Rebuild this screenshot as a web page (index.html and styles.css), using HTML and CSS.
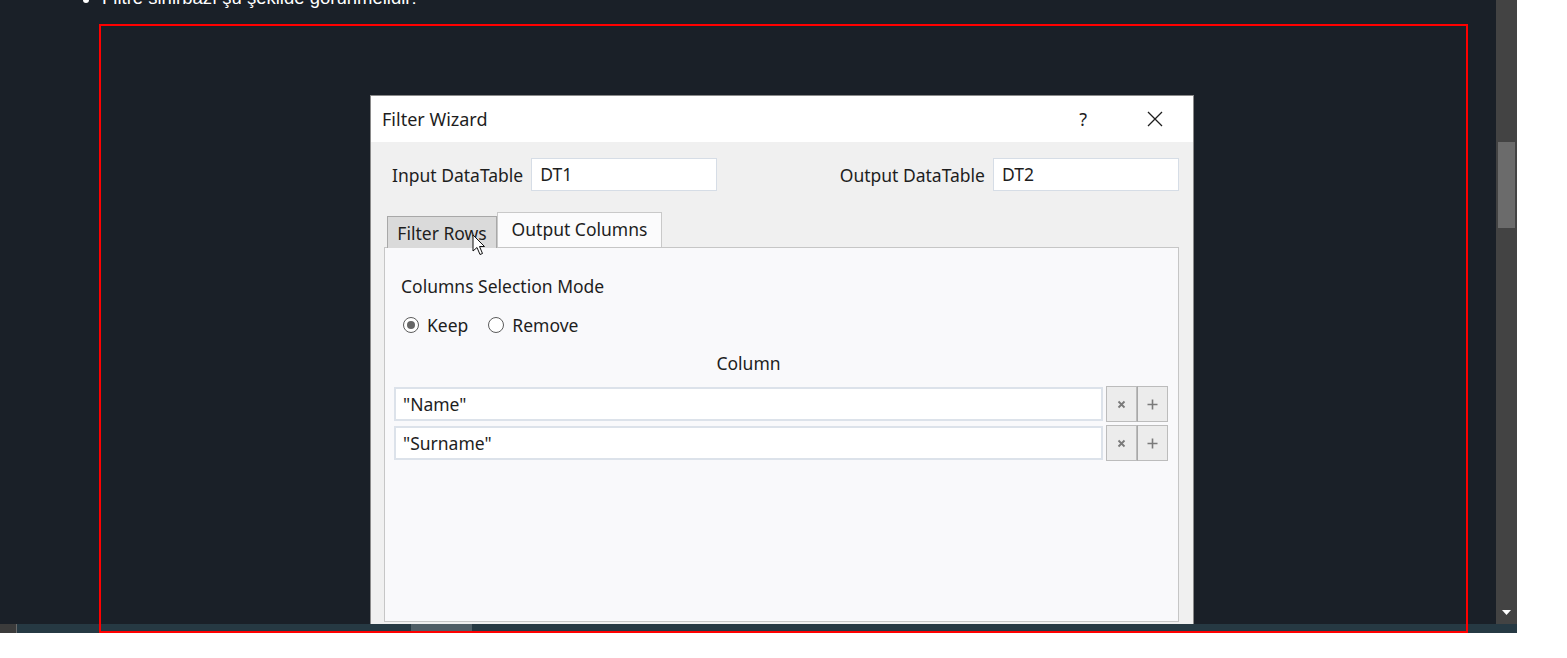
FILE: index.html
```html
<!DOCTYPE html>
<html lang="tr">
<head>
<meta charset="utf-8">
<title>Filter Wizard</title>
<link rel="stylesheet" href="styles.css">
</head>
<body>
<div class="app">
  <div class="main">
    <div class="content">
      <div class="note"><span class="dot"></span><span class="note-text">Filtre sihirbazı şu şekilde görünmelidir:</span></div>
      <div class="figure">
        <div class="dialog">
          <div class="titlebar">
            <span class="title">Filter Wizard</span>
            <span class="help">?</span>
            <svg class="close" width="16" height="16" viewBox="0 0 16 16"><path d="M1 1 L15 15 M15 1 L1 15" stroke="#1e1e1e" stroke-width="1.3" fill="none"/></svg>
          </div>
          <div class="body">
            <div class="io-row">
              <div class="field"><span class="label">Input DataTable</span><div class="io-input">DT1</div></div>
              <div class="field"><span class="label">Output DataTable</span><div class="io-input">DT2</div></div>
            </div>
            <div class="tabs">
              <div class="tab tab-hover">Filter Rows
                <svg class="cursor" width="14" height="23" viewBox="0 0 14 23"><path d="M1 1 L1 17 L5 13.5 L8 20.5 L10.5 19.5 L7.5 12.5 L12.5 12.5 Z" fill="#fff" stroke="#111" stroke-width="1" stroke-linejoin="round"/></svg>
              </div>
              <div class="tab tab-active">Output Columns</div>
            </div>
            <div class="panel">
              <div class="section-label">Columns Selection Mode</div>
              <div class="radios">
                <span class="radio checked"></span><span class="radio-label">Keep</span>
                <span class="radio"></span><span class="radio-label">Remove</span>
              </div>
              <div class="col-head">Column</div>
              <div class="col-list">
                <div class="col-row">
                  <div class="col-input">"Name"</div>
                  <div class="col-btn"><svg width="9" height="9" viewBox="0 0 9 9"><path d="M1.5 1.5 L7.5 7.5 M7.5 1.5 L1.5 7.5" stroke="#7a7a7a" stroke-width="1.8"/></svg></div>
                  <div class="col-btn"><svg width="11" height="11" viewBox="0 0 11 11"><path d="M5.5 0.5 V10.5 M0.5 5.5 H10.5" stroke="#7a7a7a" stroke-width="1.6"/></svg></div>
                </div>
                <div class="col-row">
                  <div class="col-input">"Surname"</div>
                  <div class="col-btn"><svg width="9" height="9" viewBox="0 0 9 9"><path d="M1.5 1.5 L7.5 7.5 M7.5 1.5 L1.5 7.5" stroke="#7a7a7a" stroke-width="1.8"/></svg></div>
                  <div class="col-btn"><svg width="11" height="11" viewBox="0 0 11 11"><path d="M5.5 0.5 V10.5 M0.5 5.5 H10.5" stroke="#7a7a7a" stroke-width="1.6"/></svg></div>
                </div>
              </div>
            </div>
          </div>
        </div>
      </div>
    </div>
    <div class="vscroll">
      <div class="vthumb"></div>
      <svg class="varrow" width="9" height="5" viewBox="0 0 9 5"><path d="M0 0 H9 L4.5 5 Z" fill="#fff"/></svg>
    </div>
  </div>
  <div class="hscroll"><div class="hbtn"></div><div class="hthumb"></div></div>
</div>
</body>
</html>
```
FILE: styles.css
```css
* { box-sizing: border-box; }
html, body { margin: 0; padding: 0; background: #ffffff; }
body { width: 1567px; height: 658px; overflow: hidden; }

.app { width: 1517px; display: flex; flex-direction: column; }
.main { height: 624px; display: flex; }
.content { flex: 1; background: #1a2028; }

.note {
  display: flex;
  align-items: flex-start;
  gap: 13px;
  height: 20px;
  margin: -12px 0 16px 0;
  padding-left: 83px;
  font-family: "Liberation Sans", Arial, sans-serif;
  font-size: 18.5px;
  line-height: 20px;
  color: #ffffff;
}
.dot { width: 6px; height: 6px; border-radius: 50%; background: #fff; margin-top: 9px; }

.figure {
  position: relative;
  z-index: 2;
  width: 1369px;
  height: 609px;
  margin-left: 99px;
  border: 2px solid #ff0000;
  padding: 69px 0 0 269px;
}

.dialog {
  width: 824px;
  height: 529px;
  display: flex;
  flex-direction: column;
  overflow: hidden;
  border: 1px solid #8a8a8a;
  border-bottom: none;
  font-family: "Noto Sans", "Open Sans", sans-serif;
  font-size: 17.5px;
  color: #1e1e1e;
}

.titlebar {
  height: 46px;
  flex: none;
  background: #ffffff;
  display: flex;
  align-items: center;
  padding: 0 30px 0 11px;
}
.title { font-size: 18px; }
.help { margin-left: auto; margin-right: 60px; font-size: 18px; }
.close { display: block; }

.body {
  flex: 1;
  background: #f0f0f0;
  padding: 16px 14px 0 13px;
}

.io-row {
  display: flex;
  justify-content: space-between;
  padding-left: 8px;
}
.field { display: flex; align-items: center; gap: 8px; }
.io-input {
  width: 186px;
  height: 33px;
  background: #ffffff;
  border: 1px solid #d6dde6;
  padding-left: 8px;
  line-height: 31px;
}

.tabs {
  display: flex;
  align-items: flex-end;
  height: 35px;
  margin-top: 21px;
  padding-left: 3px;
}
.tab { position: relative; display: flex; align-items: center; justify-content: center; }
.tab-hover {
  width: 110px;
  height: 32px;
  margin-bottom: -1px;
  background: #dadada;
  border: 1px solid #a8a8a8;
  border-bottom: none;
  padding-top: 1px;
}
.tab-active {
  width: 165px;
  height: 35px;
  background: #fbfbfc;
  border: 1px solid #c9c9c9;
  border-bottom: none;
  padding-bottom: 2px;
}
.cursor { position: absolute; left: 84px; top: 17px; }

.panel {
  height: 375px;
  background: #f9f9fb;
  border: 1px solid #c6c6c6;
  padding: 27px 0 0 16px;
}
.section-label { line-height: 22px; }
.radios {
  display: flex;
  align-items: center;
  height: 22px;
  margin-top: 17px;
  padding-left: 2px;
}
.radio {
  width: 16px;
  height: 16px;
  border: 1px solid #5c5c5c;
  border-radius: 50%;
  background: #fff;
  display: flex;
  align-items: center;
  justify-content: center;
}
.radio.checked::after {
  content: "";
  width: 8px;
  height: 8px;
  border-radius: 50%;
  background: #666;
}
.radio-label { margin: 0 20px 0 8px; }

.col-head {
  width: 709px;
  margin: 16px 0 0 -7px;
  text-align: center;
  line-height: 22px;
}
.col-list {
  margin: 12px 0 0 -7px;
  display: flex;
  flex-direction: column;
  gap: 3px;
}
.col-row { display: flex; align-items: center; height: 36px; }
.col-input {
  width: 709px;
  height: 34px;
  background: #fff;
  border: 2px solid #dce2ea;
  padding-left: 7px;
  line-height: 30px;
  margin-right: 3px;
}
.col-btn {
  width: 31px;
  height: 36px;
  background: #ececec;
  border: 1px solid #bcbcbc;
  display: flex;
  align-items: center;
  justify-content: center;
}
.col-btn + .col-btn { border-left: 1px solid #a8a8a8; }

.vscroll {
  width: 21px;
  background: #434343;
  display: flex;
  flex-direction: column;
  align-items: center;
}
.vthumb { width: 17px; height: 86px; margin-top: 142px; background: #6b6b6b; }
.varrow { margin-top: auto; margin-bottom: 9px; display: block; }

.hscroll {
  height: 9px;
  background: #263943;
  display: flex;
}
.hbtn { width: 17px; height: 9px; background: #3b3b3b; border-right: 1px solid #6a6a6a; }
.hthumb { width: 61px; height: 9px; margin-left: 394px; background: #4f5e66; }
```
